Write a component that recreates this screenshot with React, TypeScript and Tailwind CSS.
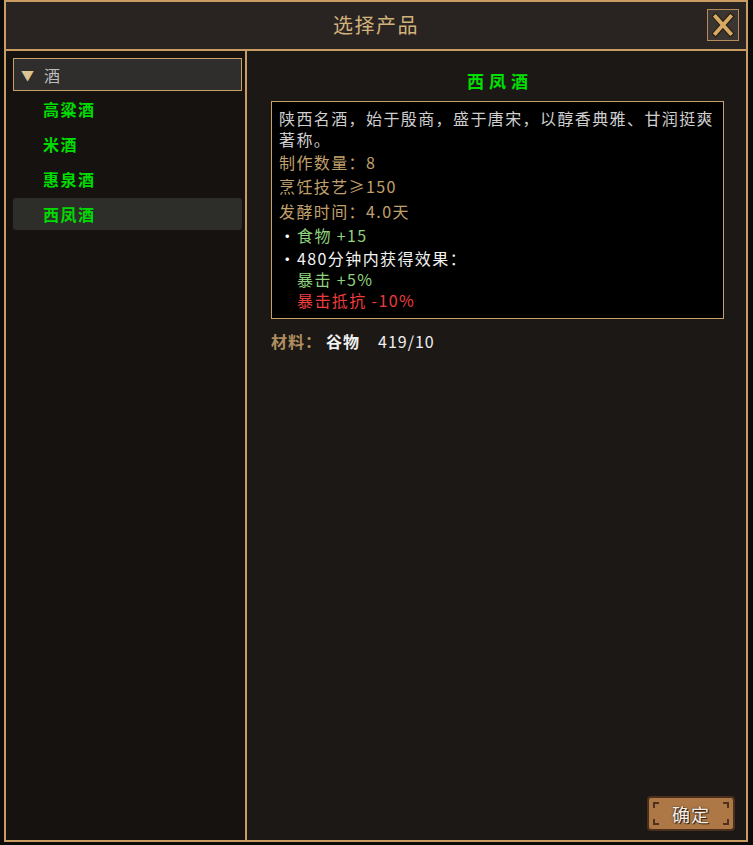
import React from "react";

const cjk = { fontFamily: '"Noto Sans CJK SC", "Noto Sans", sans-serif' };

const items = ["高粱酒", "米酒", "惠泉酒", "西凤酒"];

function CloseIcon() {
  return (
    <svg width="32" height="32" viewBox="0 0 32 32">
      <path d="M8 7 L24 25 M24 7 L8 25" stroke="#2a1e12" strokeWidth="6.5" strokeLinecap="square" />
      <path d="M8 7 L24 25 M24 7 L8 25" stroke="#d6a964" strokeWidth="4" strokeLinecap="square" />
    </svg>
  );
}

function ConfirmButton() {
  return (
    <button className="relative w-[88px] h-[35px] rounded-[4px] bg-[#ad7746] border-2 border-[#4a2f1c] flex items-center justify-center">
      <span className="absolute left-[4px] top-[4px] w-[6px] h-[6px] border-l-2 border-t-2 border-[#4e321d]" />
      <span className="absolute right-[4px] top-[4px] w-[6px] h-[6px] border-r-2 border-t-2 border-[#4e321d]" />
      <span className="absolute left-[4px] bottom-[4px] w-[6px] h-[6px] border-l-2 border-b-2 border-[#4e321d]" />
      <span className="absolute right-[4px] bottom-[4px] w-[6px] h-[6px] border-r-2 border-b-2 border-[#4e321d]" />
      <span className="text-[18px] tracking-[1px] leading-none text-[#f3ede6] [text-shadow:0_0_2px_#3a2412,1px_1px_0_#3a2412]">确定</span>
    </button>
  );
}

export default function App() {
  return (
    <div className="w-[753px] h-[845px] bg-[#0d0b09]" style={cjk}>
      <div className="ml-[4px] w-[744px] h-[842px] border-2 border-[#c89c62] flex flex-col">
        {/* title bar */}
        <div className="relative h-[49px] shrink-0 bg-[#292421] border-b-2 border-[#c89c62] flex items-center justify-center">
          <h1 className="text-[20px] tracking-[1.5px] text-[#d2b27c] leading-none -mt-[1px]">选择产品</h1>
          <button className="absolute right-[7px] top-[7px] w-[32px] h-[32px] bg-[#3a3531] border border-[#b48c5c] flex items-center justify-center">
            <CloseIcon />
          </button>
        </div>

        <div className="flex flex-1 min-h-0">
          {/* left list */}
          <div className="w-[241px] shrink-0 bg-[#15120f] border-r-2 border-[#c89c62] pt-[7px] pl-[7px] pr-[3px] flex flex-col gap-[3px]">
            <div className="h-[33px] border border-[#c8a06a] bg-[#302e2c] flex items-center pl-[7px] mb-[-1px]">
              <span className="text-[13px] text-[#dcc492] leading-none w-[23px]">▼</span>
              <span className="text-[16px] text-[#bdbdbd] leading-none">酒</span>
            </div>
            {items.map((name, i) => (
              <div
                key={name}
                className={
                  "h-[32px] flex items-center pl-[30px] rounded-[3px] " +
                  (i === items.length - 1 ? "bg-[#2d2d2a]" : "")
                }
              >
                <span className="text-[16px] tracking-[1.5px] font-bold text-[#00dc00] leading-none">{name}</span>
              </div>
            ))}
          </div>

          {/* right detail */}
          <div className="flex-1 bg-[#1b1815] flex flex-col pl-[24px] pr-[22px]">
            <div className="h-[50px] shrink-0 flex items-end justify-center pb-[10px]">
              <span className="text-[17px] font-bold tracking-[5px] pl-[5px] text-[#00e000] leading-[20px]">西凤酒</span>
            </div>
            <div className="border border-[#c8a06a] bg-black pl-[7px] pr-[3px] pt-[6px] pb-[8px] text-[16px] tracking-[1.4px]">
              <p className="leading-[21px] text-[#cfcfcf]">陕西名酒，始于殷商，盛于唐宋，以醇香典雅、甘润挺爽著称。</p>
              <p className="leading-[24px] text-[#c2a06c]">制作数量：8</p>
              <p className="leading-[25px] text-[#c2a06c]">烹饪技艺≥150</p>
              <p className="leading-[25px] text-[#c2a06c]">发酵时间：4.0天</p>
              <div className="flex leading-[23px]">
                <span className="w-[18px] text-center text-white">·</span>
                <span className="text-[#8fd27e]">食物 +15</span>
              </div>
              <div className="flex leading-[22px]">
                <span className="w-[18px] text-center text-white">·</span>
                <span className="text-[#f2f2f2]">480分钟内获得效果：</span>
              </div>
              <p className="leading-[21px] pl-[18px] text-[#8fd27e]">暴击 +5%</p>
              <p className="leading-[20px] pl-[18px] text-[#ec3c3c]">暴击抵抗 -10%</p>
            </div>
            <div className="mt-[12px] flex items-center text-[16px] tracking-[1px] leading-[20px]">
              <span className="text-[#b08e60] font-bold">材料：</span>
              <span className="ml-[4px] text-[#f0f0f0] font-bold">谷物</span>
              <span className="ml-[18px] text-[#f0f0f0]">419/10</span>
            </div>
            <div className="flex-1" />
            <div className="flex justify-end mr-[-11px] pb-[9px]">
              <ConfirmButton />
            </div>
          </div>
        </div>
      </div>
    </div>
  );
}
